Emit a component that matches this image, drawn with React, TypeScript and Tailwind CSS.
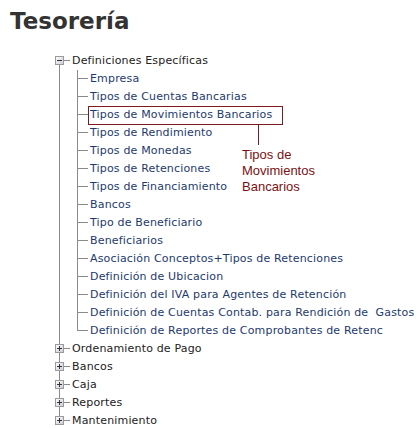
import React from 'react';

const children = [
  'Empresa',
  'Tipos de Cuentas Bancarias',
  'Tipos de Movimientos Bancarios',
  'Tipos de Rendimiento',
  'Tipos de Monedas',
  'Tipos de Retenciones',
  'Tipos de Financiamiento',
  'Bancos',
  'Tipo de Beneficiario',
  'Beneficiarios',
  'Asociación Conceptos+Tipos de Retenciones',
  'Definición de Ubicacion',
  'Definición del IVA para Agentes de Retención',
  'Definición de Cuentas Contab. para Rendición de\u00a0 Gastos',
  'Definición de Reportes de Comprobantes de Retenc',
];

const closedRoots = ['Ordenamiento de Pago', 'Bancos', 'Caja', 'Reportes', 'Mantenimiento'];

const LINE = '#8a8a8a';

function ToggleBox({ open }: { open: boolean }) {
  return (
    <>
      <defs>
        <linearGradient id="boxfill" x1="0" y1="0" x2="1" y2="1">
          <stop offset="0" stopColor="#ffffff" />
          <stop offset="1" stopColor="#c9cbd6" />
        </linearGradient>
      </defs>
      <rect x="5.5" y="4.5" width="8" height="8" fill="url(#boxfill)" stroke="#9a9a9a" />
      <line x1="7" y1="8.5" x2="12" y2="8.5" stroke="#333" />
      {!open && <line x1="9.5" y1="6" x2="9.5" y2="11" stroke="#333" />}
    </>
  );
}

function RootNode({ label, first, last, open }: { label: string; first?: boolean; last?: boolean; open: boolean }) {
  return (
    <div className="flex h-[18px] items-center">
      <svg width="20" height="18" className="shrink-0">
        {first && <line x1="9.5" y1="13" x2="9.5" y2="18" stroke={LINE} />}
        {!first && !last && <line x1="9.5" y1="0" x2="9.5" y2="18" stroke={LINE} />}
        {last && <line x1="9.5" y1="0" x2="9.5" y2="4" stroke={LINE} />}
        <line x1="14" y1="8.5" x2="20" y2="8.5" stroke={LINE} />
        <ToggleBox open={open} />
      </svg>
      <span className="ml-[2px] text-[#222]">{label}</span>
    </div>
  );
}

function ChildNode({ label, last, marked }: { label: string; last?: boolean; marked?: boolean }) {
  return (
    <div className="flex h-[18px] items-center">
      <svg width="20" height="18" className="shrink-0">
        <line x1="9.5" y1="0" x2="9.5" y2="18" stroke={LINE} />
      </svg>
      <svg width="18" height="18" className="shrink-0">
        <line x1="7.5" y1="0" x2="7.5" y2={last ? 9 : 18} stroke={LINE} />
        <line x1="7.5" y1="8.5" x2="18" y2="8.5" stroke={LINE} />
      </svg>
      {marked ? (
        <span className="relative flex h-[19px] items-center border border-[#7b1a1f] pl-[1px] pr-[10px] text-[#1d3a6e]">
          {label}
          <span className="absolute left-[169px] top-[18px] h-[20px] w-px bg-[#7b1a1f]" />
          <span className="absolute left-[153px] top-[40px] w-[120px] text-[13px] leading-[16px] tracking-normal text-[#7b1113] font-['Liberation_Sans',Arial,sans-serif]">
            Tipos de
            <br />
            Movimientos
            <br />
            Bancarios
          </span>
        </span>
      ) : (
        <span className="ml-[2px] text-[#1d3a6e]">{label}</span>
      )}
    </div>
  );
}

export default function App() {
  return (
    <div className="h-[428px] w-[420px] overflow-hidden bg-white font-['DejaVu_Sans',Verdana,sans-serif]">
      <h1 className="pl-[10px] pt-[8px] text-[23px] font-bold leading-[26px] text-[#333]">Tesorería</h1>
      <div className="mt-[18px] pl-[50px] text-[11px] tracking-[0.17px] whitespace-nowrap">
        <RootNode label="Definiciones Específicas" first open />
        {children.map((c, i) => (
          <ChildNode key={c} label={c} last={i === children.length - 1} marked={i === 2} />
        ))}
        {closedRoots.map((r, i) => (
          <RootNode key={r} label={r} open={false} last={i === closedRoots.length - 1} />
        ))}
      </div>
    </div>
  );
}
